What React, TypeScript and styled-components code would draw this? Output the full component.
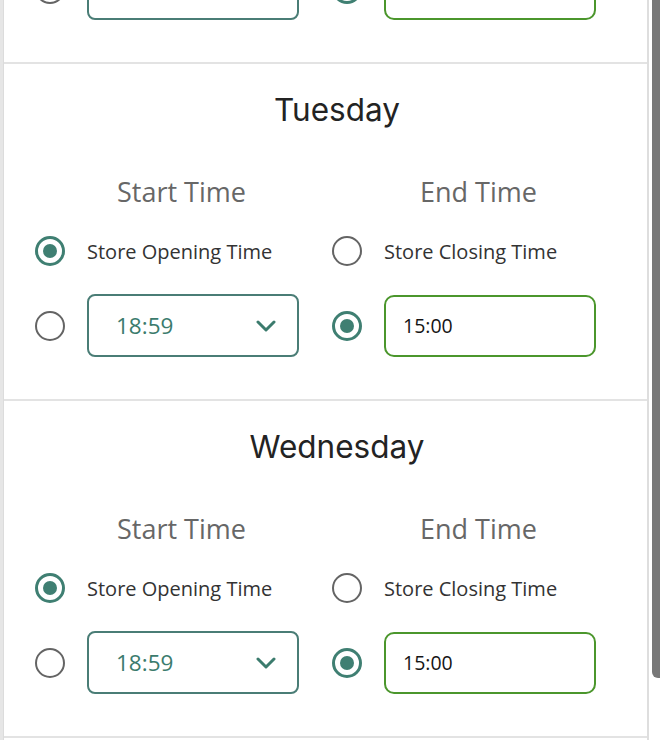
import React from "react";
import styled, { createGlobalStyle } from "styled-components";

const GlobalStyle = createGlobalStyle`
  html, body {
    margin: 0;
    padding: 0;
    background: #e6e6e6;
    overflow: hidden;
  }
  * { box-sizing: border-box; }
`;

const TEAL = "#3f7f72";
const BOX_TEAL = "#4a7d76";
const GREEN = "#4b962c";

const Page = styled.div`
  width: 660px;
  height: 740px;
  display: flex;
  overflow: hidden;
  background: #e6e6e6;
`;

const Card = styled.div`
  margin-left: 3px;
  width: 646px;
  height: 740px;
  background: #ffffff;
  border-left: 1px solid #dcdcdc;
  border-right: 2px solid #dedede;
  overflow: hidden;
`;

const ScrollTrack = styled.div`
  width: 11px;
  height: 740px;
  background: #ffffff;
  padding-left: 3px;
`;

const Thumb = styled.div`
  width: 8px;
  height: 678px;
  background: #787878;
  border-bottom-left-radius: 6px;
`;

const Scroller = styled.div`
  margin-top: -273px;
`;

const Section = styled.section`
  height: 337px;
  border-bottom: 2px solid #e3e3e3;
  padding: 26px 0 0 30px;
  display: flex;
  flex-direction: column;
`;

const DayTitle = styled.h2`
  margin: 0;
  height: 40px;
  line-height: 40px;
  text-align: center;
  width: 606px;
  font-family: Inter, "Liberation Sans", sans-serif;
  font-weight: 400;
  font-size: 31.5px;
  color: #232323;
`;

const Columns = styled.div`
  margin-top: 45px;
  display: grid;
  grid-template-columns: 297px 297px;
`;

const Column = styled.div`
  display: flex;
  flex-direction: column;
`;

const ColumnHeading = styled.div`
  height: 34px;
  line-height: 34px;
  text-align: center;
  padding-right: 2px;
  font-family: "Open Sans", "Noto Sans", sans-serif;
  font-size: 27px;
  color: #676767;
  margin-bottom: 22px;
`;

const OptionRow = styled.div<{ $tall?: boolean }>`
  display: flex;
  align-items: center;
  gap: 22px;
  padding-left: 1px;
  height: ${(p) => (p.$tall ? "63px" : "40px")};
  margin-bottom: ${(p) => (p.$tall ? "0" : "23px")};
`;

const Radio = styled.span<{ $checked?: boolean }>`
  position: relative;
  flex: none;
  width: 30px;
  height: 30px;
  border-radius: 50%;
  border: ${(p) => (p.$checked ? `3px solid ${TEAL}` : "2.5px solid #646464")};
  &::after {
    content: "";
    display: ${(p) => (p.$checked ? "block" : "none")};
    position: absolute;
    left: 50%;
    top: 50%;
    width: 14px;
    height: 14px;
    margin: -7px 0 0 -7px;
    border-radius: 50%;
    background: ${TEAL};
  }
`;

const OptionLabel = styled.span`
  font-family: "Open Sans", "Noto Sans", sans-serif;
  font-size: 20px;
  color: #333333;
`;

const SelectBox = styled.div`
  width: 212px;
  height: 63px;
  border: 2px solid ${BOX_TEAL};
  border-radius: 8px;
  display: flex;
  align-items: center;
  justify-content: space-between;
  padding: 0 21px 0 27px;
  font-family: "Open Sans", "Noto Sans", sans-serif;
  font-size: 22.5px;
  color: #3b7b6d;
`;

const InputBox = styled.div`
  width: 212px;
  height: 62px;
  border: 2px solid ${GREEN};
  border-radius: 10px;
  display: flex;
  align-items: center;
  padding: 0 17px;
  font-family: "Open Sans", "Noto Sans", sans-serif;
  font-size: 19.5px;
  color: #151515;
`;

const Chevron = () => (
  <svg width="20" height="12" viewBox="0 0 20 12" fill="none">
    <path d="M2 2 L10 10 L18 2" stroke="#3b7b6d" strokeWidth="3" strokeLinecap="round" strokeLinejoin="round" />
  </svg>
);

const DaySection = ({ day }: { day: string }) => (
  <Section>
    <DayTitle>{day}</DayTitle>
    <Columns>
      <Column>
        <ColumnHeading>Start Time</ColumnHeading>
        <OptionRow>
          <Radio $checked />
          <OptionLabel>Store Opening Time</OptionLabel>
        </OptionRow>
        <OptionRow $tall>
          <Radio />
          <SelectBox>
            <span>18:59</span>
            <Chevron />
          </SelectBox>
        </OptionRow>
      </Column>
      <Column>
        <ColumnHeading>End Time</ColumnHeading>
        <OptionRow>
          <Radio />
          <OptionLabel>Store Closing Time</OptionLabel>
        </OptionRow>
        <OptionRow $tall>
          <Radio $checked />
          <InputBox>15:00</InputBox>
        </OptionRow>
      </Column>
    </Columns>
  </Section>
);

export default function App() {
  return (
    <>
      <GlobalStyle />
      <Page>
        <Card>
          <Scroller>
            <DaySection day="Monday" />
            <DaySection day="Tuesday" />
            <DaySection day="Wednesday" />
            <DaySection day="Thursday" />
          </Scroller>
        </Card>
        <ScrollTrack>
          <Thumb />
        </ScrollTrack>
      </Page>
    </>
  );
}
